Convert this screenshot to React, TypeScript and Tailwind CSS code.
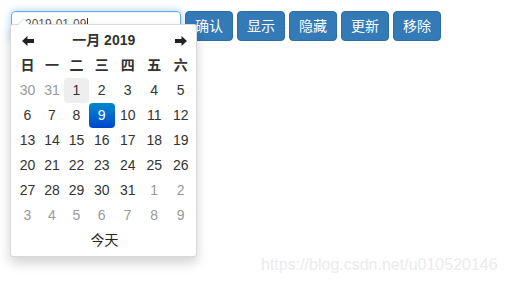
const BUTTONS = ['确认', '显示', '隐藏', '更新', '移除'];

const WEEKDAYS = ['日', '一', '二', '三', '四', '五', '六'];

type Day = { n: number; muted?: boolean; hover?: boolean; active?: boolean };

const DAYS: Day[] = [
  { n: 30, muted: true },
  { n: 31, muted: true },
  ...Array.from({ length: 31 }, (_, i) => ({ n: i + 1, hover: i === 0, active: i === 8 })),
  ...Array.from({ length: 9 }, (_, i) => ({ n: i + 1, muted: true })),
];

const Arrow = ({ flip }: { flip?: boolean }) => (
  <svg width="12" height="10" viewBox="0 0 12 10" className={flip ? 'rotate-180' : ''}>
    <path d="M0 5 L5.5 0 L5.5 3 L12 3 L12 7 L5.5 7 L5.5 10 Z" fill="#222" />
  </svg>
);

const DatePicker = () => {
  return (
    <div className="absolute left-[10px] top-[24px] w-[187px] rounded-[3px] border border-black/15 bg-white pt-[3px] pb-[3px] pl-[4px] pr-[2px] shadow-[0_6px_12px_rgba(0,0,0,0.175)]">
      {/* caret */}
      <div className="absolute -top-[7px] left-[6px] h-0 w-0 border-x-[7px] border-b-[7px] border-x-transparent border-b-black/15" />
      <div className="absolute -top-[6px] left-[7px] h-0 w-0 border-x-[6px] border-b-[6px] border-x-transparent border-b-white" />

      <div className="grid grid-cols-[25px_24px_25px_25.5px_26.5px_26.5px_26.5px] text-[14px] text-[#333]">
        <div className="flex h-[25px] items-center justify-center">
          <Arrow />
        </div>
        <div className="col-span-5 flex h-[25px] items-center justify-center font-bold">一月 2019</div>
        <div className="flex h-[25px] items-center justify-center">
          <Arrow flip />
        </div>

        {WEEKDAYS.map((d) => (
          <div key={d} className="flex h-[25px] items-center justify-center font-bold">
            {d}
          </div>
        ))}

        {DAYS.map((d, i) => (
          <div
            key={i}
            className={
              'flex h-[25px] items-center justify-center rounded-[4px] ' +
              (d.active
                ? 'bg-gradient-to-b from-[#0088cc] to-[#0044cc] text-white'
                : d.hover
                  ? 'bg-[#eeeeee]'
                  : d.muted
                    ? 'text-[#999]'
                    : '')
            }
          >
            {d.n}
          </div>
        ))}

        <div className="col-span-7 flex h-[25px] items-center justify-center text-[#222]">今天</div>
      </div>
    </div>
  );
};

export default function App() {
  return (
    <div className="relative h-[282px] w-[505px] bg-white font-['Liberation_Sans','Noto_Sans_CJK_SC',sans-serif] text-[14px]">
      <div className="flex gap-[4px] pl-[11px] pt-[11px]">
        <div className="flex h-[30px] w-[170px] items-center rounded-[4px] border border-[#66afe9] px-[13px] pb-[4px] text-[12px] text-[#555] shadow-[inset_0_1px_1px_rgba(0,0,0,0.075),0_0_8px_rgba(102,175,233,0.6)]">
          2019-01-09<span className="ml-[1px] h-[13px] w-px bg-[#333]" />
        </div>
        {BUTTONS.map((b) => (
          <button
            key={b}
            className="h-[30px] w-[48px] rounded-[4px] border border-[#2e6da4] bg-[#337ab7] text-[14px] text-white"
          >
            {b}
          </button>
        ))}
      </div>

      <DatePicker />

      <p className="absolute left-[261px] top-[253px] text-[16px] text-[#ebebeb]">https://blog.csdn.net/u010520146</p>
    </div>
  );
}
